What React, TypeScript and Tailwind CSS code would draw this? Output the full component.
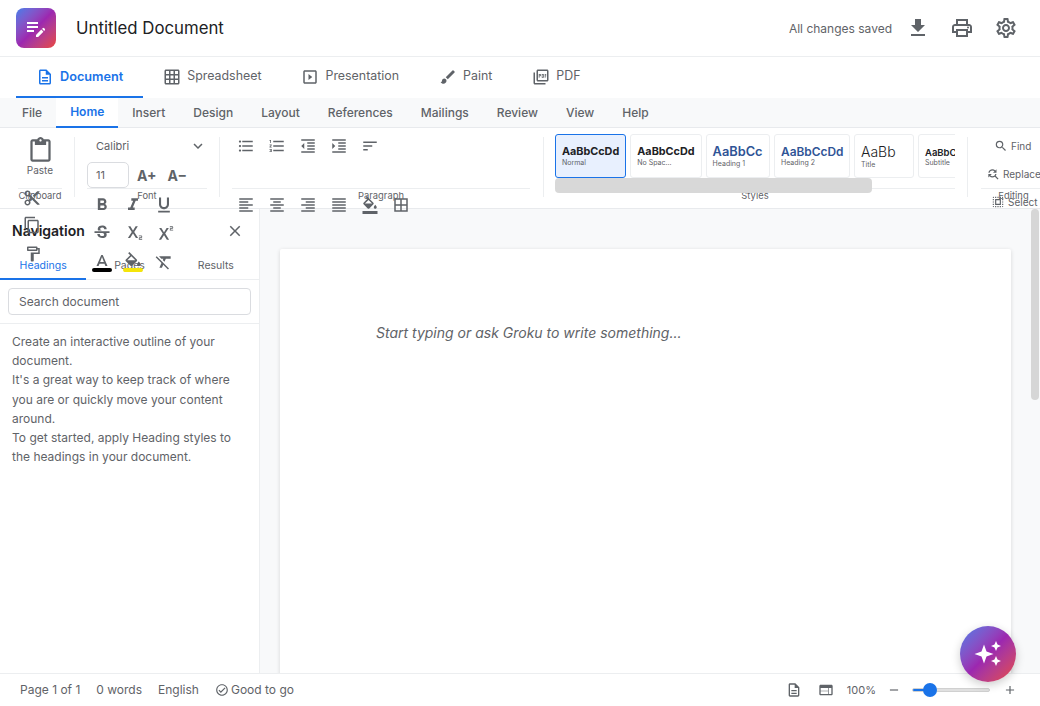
import React from "react";
import {
  MdEditNote, MdOutlineDescription, MdOutlineGridOn, MdOutlineSlideshow, MdBrush, MdOutlinePictureAsPdf,
  MdFileDownload, MdOutlinePrint, MdOutlineSettings, MdOutlineContentPaste, MdOutlineContentCut,
  MdOutlineContentCopy, MdOutlineFormatPaint, MdKeyboardArrowDown,
  MdFormatBold, MdFormatItalic, MdFormatUnderlined, MdStrikethroughS, MdSubscript, MdSuperscript,
  MdTextFormat, MdFormatColorFill, MdFormatClear, MdFormatListBulleted, MdFormatListNumbered,
  MdFormatIndentDecrease, MdFormatIndentIncrease, MdSort, MdFormatAlignLeft, MdFormatAlignCenter,
  MdFormatAlignRight, MdFormatAlignJustify, MdBorderAll, MdSearch, MdFindReplace, MdSelectAll, MdClose,
  MdOutlineCheckCircle, MdWeb, MdRemove, MdAdd,
} from "react-icons/md";

const appTabs = [
  { label: "Document", Icon: MdOutlineDescription, active: true },
  { label: "Spreadsheet", Icon: MdOutlineGridOn },
  { label: "Presentation", Icon: MdOutlineSlideshow },
  { label: "Paint", Icon: MdBrush },
  { label: "PDF", Icon: MdOutlinePictureAsPdf },
];

const ribbonTabs = ["File", "Home", "Insert", "Design", "Layout", "References", "Mailings", "Review", "View", "Help"];

const styleCards = [
  { sample: "AaBbCcDd", name: "Normal", w: "w-[71.3px]", cls: "text-[10.8px] leading-[12px] font-bold text-[#202124]", active: true },
  { sample: "AaBbCcDd", name: "No Spac...", w: "w-[71.3px]", cls: "text-[10.8px] leading-[12px] font-bold text-[#202124]" },
  { sample: "AaBbCc", name: "Heading 1", w: "w-[64.4px]", cls: "text-[12.8px] leading-[15px] font-semibold text-[#2f5496]" },
  { sample: "AaBbCcDd", name: "Heading 2", w: "w-[76px]", cls: "text-[11.9px] leading-[13px] font-semibold text-[#2f5496]" },
  { sample: "AaBb", name: "Title", w: "w-[60px]", cls: "text-[14px] leading-[16px] font-light text-[#202124]" },
];

function GroupLabel({ children }: { children: string }) {
  return (
    <div className="h-[20px] border-t border-[#eceef0] text-center text-[9.4px] leading-[14px] text-[#5f6368]">
      {children}
    </div>
  );
}

export default function App() {
  return (
    <div className="relative h-[706px] w-[1040px] overflow-hidden bg-white flex flex-col font-['Inter',sans-serif] text-[#5f6368]">
      {/* top bar */}
      <header className="h-[57px] shrink-0 border-b border-[#eceef0] flex items-center pl-4 pr-[22px]">
        <div className="w-10 h-10 rounded-lg bg-gradient-to-br from-[#3b7cea] via-[#9c27b0] to-[#ea4335] flex items-center justify-center text-white">
          <MdEditNote size={24} />
        </div>
        <div className="ml-5 pt-[2px] text-[16.8px] text-[#202124]">Untitled Document</div>
        <div className="ml-auto pt-[2px] text-[12px] text-[#5f6368] mr-[14px]">All changes saved</div>
        <div className="flex items-center gap-[20px] text-[#5f6368]">
          <MdFileDownload size={24} />
          <MdOutlinePrint size={24} />
          <MdOutlineSettings size={24} />
        </div>
      </header>

      {/* app tabs */}
      <nav className="h-[41px] shrink-0 flex pl-4">
        {appTabs.map(({ label, Icon, active }) => (
          <div
            key={label}
            className={
              "h-full px-5 flex items-center gap-[6px] border-b-2 " +
              (active ? "text-[12.7px] border-[#1a73e8] text-[#1a73e8] font-semibold" : "text-[12.4px] border-transparent text-[#5f6368]")
            }
          >
            <Icon size={18} />
            <span>{label}</span>
          </div>
        ))}
      </nav>

      {/* ribbon tabs */}
      <div className="h-[30px] shrink-0 bg-[#f8f9fa] border-b border-[#e8eaed] flex pl-2">
        {ribbonTabs.map((t) => (
          <div
            key={t}
            className={
              "h-[30px] px-[14px] flex items-center text-[12px] " +
              (t === "Home" ? "bg-white border-b-2 border-[#1a73e8] text-[#1a73e8] font-semibold" : "font-medium text-[#5f6368]")
            }
          >
            {t}
          </div>
        ))}
      </div>

      {/* ribbon, its tools spill below on purpose like in the app */}
      <div className="relative z-10 h-[81px] shrink-0 border-b border-[#e8eaed] bg-white flex pt-[9px]">
        {/* clipboard */}
        <div className="w-[75px] h-[60px] border-r border-[#eceef0] pl-[18px] pr-[12px] shrink-0">
          <div className="h-[51px] flex flex-col items-center">
            <MdOutlineContentPaste size={27} className="shrink-0" />
            <div className="text-[10px] leading-[12px] shrink-0">Paste</div>
            <MdOutlineContentCut size={18} className="mt-[13px] shrink-0 self-start ml-[5px]" />
            <MdOutlineContentCopy size={18} className="mt-[9px] shrink-0 self-start ml-[5px]" />
            <MdOutlineFormatPaint size={18} className="mt-[11px] shrink-0 self-start ml-[6px]" />
          </div>
          <GroupLabel>Clipboard</GroupLabel>
        </div>

        {/* font */}
        <div className="w-[145px] h-[60px] border-r border-[#eceef0] pl-[12px] pr-[12px] shrink-0">
          <div className="h-[51px]">
            <div className="h-[18px] flex items-center justify-between pl-[9px] text-[11px]">
              <span>Calibri</span>
              <MdKeyboardArrowDown size={18} />
            </div>
            <div className="flex items-center mt-[7px]">
              <div className="w-[42px] h-[26px] rounded-[5px] border border-[#dadce0] text-[11px] flex items-center pl-2 shrink-0">11</div>
              <span className="ml-[8px] text-[14px] font-bold">A+</span>
              <span className="ml-[11px] text-[14px] font-bold">A−</span>
            </div>
            <div className="grid grid-cols-[31px_31px_31px] -ml-px mt-[3px] auto-rows-[28px] place-items-center">
              <MdFormatBold size={20} />
              <MdFormatItalic size={20} />
              <MdFormatUnderlined size={20} />
              <MdStrikethroughS size={20} />
              <MdSubscript size={20} />
              <MdSuperscript size={20} />
              <div className="flex flex-col items-center">
                <MdTextFormat size={24} className="mt-[1px]" />
                <div className="w-[20px] h-[4px] -mt-[7px] rounded-sm bg-black" />
              </div>
              <div className="flex flex-col items-center">
                <MdFormatColorFill size={20} className="mt-[2px]" />
                <div className="w-[20px] h-[4px] -mt-[4px] rounded-sm bg-[#f5e50a]" />
              </div>
              <MdFormatClear size={20} className="mt-[2px]" />
            </div>
          </div>
          <GroupLabel>Font</GroupLabel>
        </div>

        {/* paragraph */}
        <div className="w-[324px] h-[60px] border-r border-[#eceef0] pl-[12px] pr-[13px] shrink-0">
          <div className="h-[51px] flex flex-col -ml-[2px]">
            <div className="flex h-[18px] items-center shrink-0">
              {[MdFormatListBulleted, MdFormatListNumbered, MdFormatIndentDecrease, MdFormatIndentIncrease, MdSort].map((Icon, i) => (
                <div key={i} className="w-[31px] flex justify-center"><Icon size={18} /></div>
              ))}
            </div>
            <div className="flex h-[18px] items-center mt-[41px] shrink-0">
              {[MdFormatAlignLeft, MdFormatAlignCenter, MdFormatAlignRight, MdFormatAlignJustify, MdFormatColorFill, MdBorderAll].map((Icon, i) => (
                <div key={i} className="w-[31px] flex justify-center"><Icon size={18} /></div>
              ))}
            </div>
          </div>
          <GroupLabel>Paragraph</GroupLabel>
        </div>

        {/* styles */}
        <div className="w-[424px] h-[60px] border-r border-[#eceef0] pl-[11px] pr-[12px] shrink-0">
          <div className="h-[54px] -mt-[3px] overflow-hidden">
            <div className="flex gap-1 h-[44px]">
              {styleCards.map((c) => (
                <div
                  key={c.name}
                  className={
                    c.w + " h-[44px] shrink-0 rounded-[3px] border pl-[6px] flex flex-col justify-center " +
                    (c.active ? "border-[#1a73e8] bg-[#e8f0fe]" : "border-[#eceef0]")
                  }
                >
                  <div className={"whitespace-nowrap " + c.cls}>{c.sample}</div>
                  <div className="text-[7px] leading-[9px] text-[#5f6368] whitespace-nowrap">{c.name}</div>
                </div>
              ))}
              <div className="w-[50px] h-[44px] shrink-0 rounded-l-[3px] border border-[#eceef0] pl-[6px] flex flex-col justify-center overflow-hidden">
                <div className="text-[9.5px] leading-[13px] font-semibold text-[#202124] whitespace-nowrap">AaBbCc</div>
                <div className="text-[7px] leading-[8px] whitespace-nowrap">Subtitle</div>
              </div>
            </div>
          </div>
          <GroupLabel>Styles</GroupLabel>
        </div>

        {/* editing */}
        <div className="flex-1 min-w-0 h-[60px] pl-[13px]">
          <div className="w-[65px]">
            <div className="h-[51px] text-[10px]">
              <div className="h-[18px] flex items-center gap-[3px] pl-[13px]"><MdSearch size={14} /><span>Find</span></div>
              <div className="h-[28px] mt-[5px] flex items-center gap-[3px] pl-[5px] whitespace-nowrap"><MdFindReplace size={14} /><span>Replace</span></div>
              <div className="h-[28px] flex items-center gap-[3px] pl-[10px] whitespace-nowrap"><MdSelectAll size={14} /><span>Select</span></div>
            </div>
            <GroupLabel>Editing</GroupLabel>
          </div>
        </div>
      </div>

      {/* nav + canvas */}
      <div className="flex-1 min-h-0 flex">
        <aside className="w-[260px] shrink-0 border-r border-[#eceef0] flex flex-col">
          <div className="h-[45px] flex items-center justify-between pl-3 pr-[15px] pb-[2px]">
            <span className="text-[14px] font-semibold text-[#202124]">Navigation</span>
            <MdClose size={18} />
          </div>
          <div className="h-[26px] flex border-b border-[#eceef0] text-[10.5px]">
            <div className="flex-1 flex items-center justify-center text-[#1a73e8] border-b-2 border-[#1a73e8] h-[26px]">Headings</div>
            <div className="flex-1 flex items-center justify-center pb-[1px]">Pages</div>
            <div className="flex-1 flex items-center justify-center pb-[1px]">Results</div>
          </div>
          <div className="h-[44px] border-b border-[#eceef0] px-2 pt-2">
            <div className="h-[27px] rounded-[4px] border border-[#dadce0] pl-[10px] flex items-center text-[12px]">Search document</div>
          </div>
          <div className="px-3 pt-[8px] text-[12px] leading-[19.2px]">
            <p>Create an interactive outline of your document.</p>
            <p>It's a great way to keep track of where you are or quickly move your content around.</p>
            <p>To get started, apply Heading styles to the headings in your document.</p>
          </div>
        </aside>

        <main className="flex-1 min-w-0 bg-[#f8f9fa] flex">
          <div className="flex-1 min-w-0 pt-10 px-5 overflow-hidden">
            <div className="h-[600px] bg-white rounded-t-[2px] shadow-[0_1px_4px_rgba(0,0,0,0.14)] px-[96px] pt-[73px] text-[14px] italic text-[#5f6368]">
              Start typing or ask Groku to write something...
            </div>
          </div>
          <div className="w-[9px] shrink-0">
            <div className="w-[8px] h-[191px] rounded-[4px] bg-[#d6d6d6]" />
          </div>
        </main>
      </div>

      {/* status bar */}
      <footer className="h-[33px] shrink-0 border-t border-[#eceef0] bg-white flex items-center pl-5 pr-[23px] text-[12px]">
        <span>Page 1 of 1</span>
        <span className="ml-4">0 words</span>
        <span className="ml-4">English</span>
        <span className="ml-4 flex items-center gap-[2px]"><MdOutlineCheckCircle size={14} />Good to go</span>
        <div className="ml-auto flex items-center">
          <MdOutlineDescription size={16} />
          <MdWeb size={16} className="ml-[16px]" />
          <span className="ml-[13px] text-[11px]">100%</span>
          <MdRemove size={14} className="ml-[11px]" />
          <div className="relative ml-[11px] w-[78px] h-[4px] rounded-full bg-[#e0e0e0] border border-[#d0d0d0]">
            <div className="w-[18px] h-full bg-[#1a73e8] rounded-l-full" />
            <div className="absolute left-[10px] top-[-6px] w-[14px] h-[14px] rounded-full bg-[#1a73e8]" />
          </div>
          <MdAdd size={14} className="ml-[13px]" />
        </div>
      </footer>

      {/* horizontal scrollbar of the styles strip */}
      <div className="absolute z-20 left-[555px] top-[178px] w-[317px] h-[15px] rounded-[4px] bg-[#d6d6d6]/95" />

      {/* assistant button */}
      <div className="absolute z-30 left-[960px] top-[626px] w-14 h-14 rounded-full bg-gradient-to-br from-[#3b7cea] via-[#9c27b0] to-[#ea4335] shadow-[0_3px_10px_rgba(0,0,0,0.2)]">
        <svg viewBox="0 0 56 56" width="56" height="56" fill="white">
          <path d="M24 18.5 L26.5 25.5 L33.5 28 L26.5 30.5 L24 37.5 L21.5 30.5 L14.5 28 L21.5 25.5 Z" />
          <path d="M36 15 L37.5 18.5 L41 20 L37.5 21.5 L36 25 L34.5 21.5 L31 20 L34.5 18.5 Z" />
          <path d="M36 30 L37.5 33.5 L41 35 L37.5 36.5 L36 40 L34.5 36.5 L31 35 L34.5 33.5 Z" />
        </svg>
      </div>
    </div>
  );
}
